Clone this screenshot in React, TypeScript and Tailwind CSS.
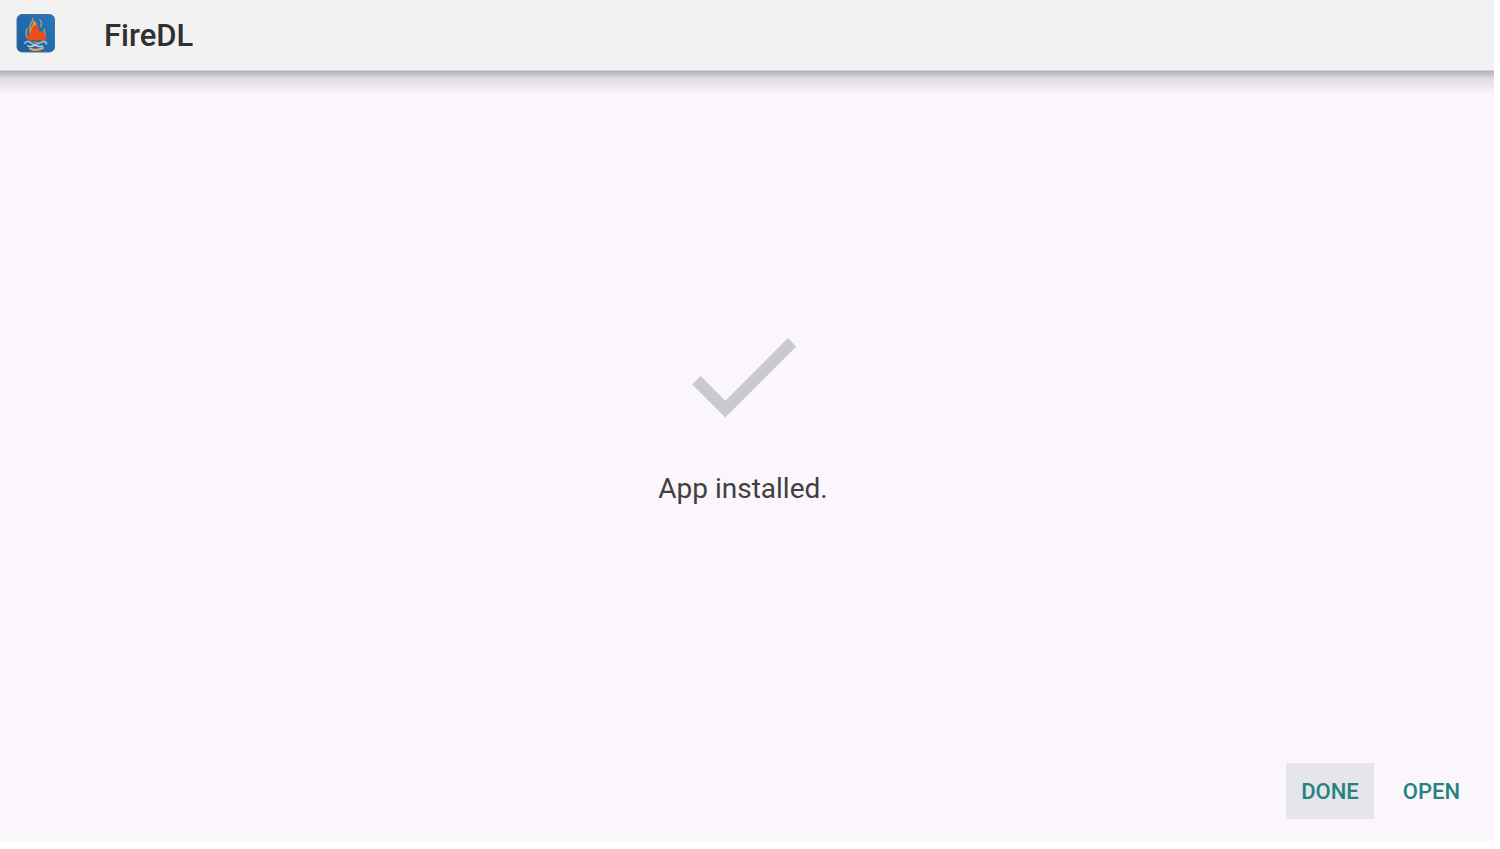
function AppIcon() {
  return (
    <svg viewBox="0 0 40 40" className="h-10 w-10 shrink-0" role="img" aria-label="FireDL icon">
      <defs>
        <linearGradient id="tile" x1="0" y1="1" x2="1" y2="0">
          <stop offset="0" stopColor="#1d5c9f" />
          <stop offset="1" stopColor="#2a78bd" />
        </linearGradient>
      </defs>
      <rect x="1" y="0.5" width="37.5" height="37.5" rx="5" fill="url(#tile)" stroke="#4b7199" strokeWidth="1" />
      {/* outer flame licks */}
      <path
        d="M17 4.5c-.5 4-3.500 6-3.500 10M11 15c-1.500 4-1 7 .5 9M19 8l2 5M24 6c2 2 2 4 .5 6.500M28.500 15c-1.500 3 1 5 1 8"
        stroke="#a99a68"
        strokeWidth="1.600"
        strokeLinecap="round"
        fill="none"
      />
      <path d="M17.500 6l-1 5-3 5-1 4 5-5 3-2-1-4z" fill="#d9a04a" />
      <path
        d="M18 11c-2 2-2 4-3 6-1 3-4 5-3 8l2 2c4-1 8-2 14 0 2-1 2.500-3 2-5-1-2-3-2-3.500-5l-2 1c-2-1-2-5-4.500-7z"
        fill="#ef4d16"
      />
      {/* logs */}
      <path d="M8.500 30c1-3 4-3 5-2l5 3 9-3.500c2 0 3 1 3 3" stroke="#9fb4c4" strokeWidth="1.800" fill="none" />
      <path d="M11 31.500c3 2 5 1 7 0s5 3 9 0" stroke="#cfd6da" strokeWidth="1.400" fill="none" />
      <path d="M17 27l2 3 4-2z" fill="#f0662c" />
      <path d="M14 34.500c4 2 8 2 13-.5" stroke="#dcae5c" strokeWidth="2.200" strokeLinecap="round" fill="none" />
    </svg>
  )
}

function CheckMark() {
  return (
    <svg viewBox="0 0 24 24" className="h-[142px] w-[142px]" fill="#c8cacd" aria-hidden="true">
      <path d="M9 16.17L4.83 12l-1.42 1.41L9 19 21 7l-1.41-1.41z" />
    </svg>
  )
}

export default function App() {
  return (
    <div className="flex min-h-screen bg-white pr-1.5 pb-2 font-['Roboto',sans-serif]">
      <div className="flex flex-1 flex-col bg-[#faf6fc]">
        <header className="flex h-[71px] items-center gap-12 border-b border-[#d8d3d9] bg-[#f2f2f2] px-4 pb-0.5">
          <AppIcon />
          <h1 className="pt-1 text-[31px] leading-9 font-medium text-[#303030]">FireDL</h1>
        </header>
        <div className="h-6 bg-linear-to-b from-[#b3adb4] via-[#dfdce2] via-30% to-[#faf6fc]" />

        <main className="flex flex-1 flex-col items-center justify-center gap-6 pr-2 pb-[46px]">
          <CheckMark />
          <p className="text-[28px] leading-9 text-[#404040]">App installed.</p>
        </main>

        <footer className="flex justify-end gap-[14px] px-[19px] pb-[22px]">
          <button
            type="button"
            autoFocus
            className="h-14 px-[15px] text-[22px] font-medium text-[#25837f] outline-none focus:bg-[#e6e5e9]"
          >
            DONE
          </button>
          <button
            type="button"
            className="h-14 px-[15px] text-[22px] font-medium text-[#25837f] outline-none focus:bg-[#e6e5e9]"
          >
            OPEN
          </button>
        </footer>
      </div>
    </div>
  )
}
